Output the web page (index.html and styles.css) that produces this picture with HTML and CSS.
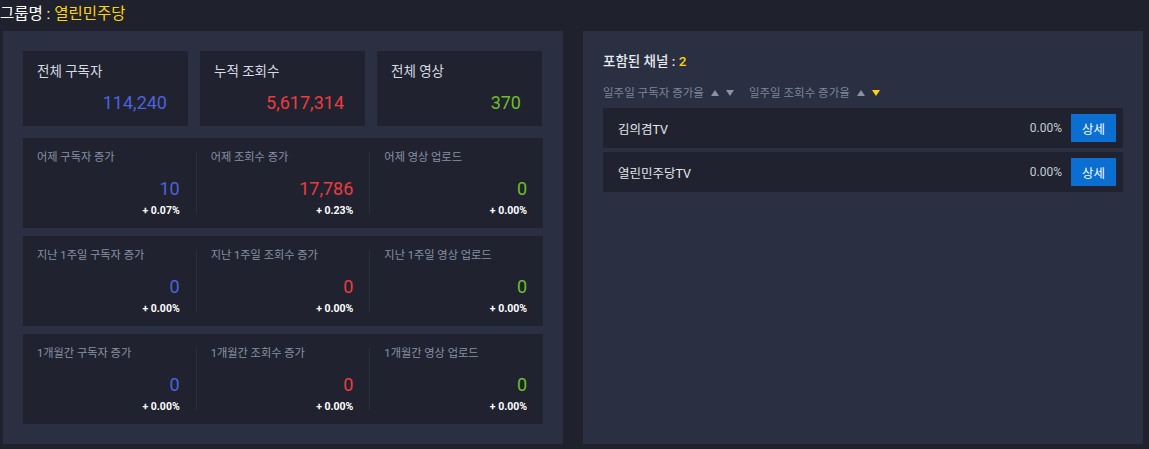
FILE: index.html
```html
<!DOCTYPE html>
<html lang="ko">
<head>
<meta charset="utf-8">
<title>그룹 통계</title>
<link rel="stylesheet" href="styles.css">
</head>
<body>
<div class="page">
  <h1 class="group-title">그룹명 : <span class="accent">열린민주당</span></h1>
  <div class="panels">
    <section class="panel stats">
      <div class="totals">
        <div class="total-card">
          <div class="total-label">전체 구독자</div>
          <div class="total-value blue">114,240</div>
        </div>
        <div class="total-card">
          <div class="total-label">누적 조회수</div>
          <div class="total-value red">5,617,314</div>
        </div>
        <div class="total-card">
          <div class="total-label">전체 영상</div>
          <div class="total-value green">370</div>
        </div>
      </div>

      <div class="period">
        <div class="metric">
          <div class="metric-label">어제 구독자 증가</div>
          <div class="metric-value blue">10</div>
          <div class="metric-rate">+ 0.07%</div>
        </div>
        <div class="metric">
          <div class="metric-label">어제 조회수 증가</div>
          <div class="metric-value red">17,786</div>
          <div class="metric-rate">+ 0.23%</div>
        </div>
        <div class="metric">
          <div class="metric-label">어제 영상 업로드</div>
          <div class="metric-value green">0</div>
          <div class="metric-rate">+ 0.00%</div>
        </div>
      </div>

      <div class="period">
        <div class="metric">
          <div class="metric-label">지난 1주일 구독자 증가</div>
          <div class="metric-value blue">0</div>
          <div class="metric-rate">+ 0.00%</div>
        </div>
        <div class="metric">
          <div class="metric-label">지난 1주일 조회수 증가</div>
          <div class="metric-value red">0</div>
          <div class="metric-rate">+ 0.00%</div>
        </div>
        <div class="metric">
          <div class="metric-label">지난 1주일 영상 업로드</div>
          <div class="metric-value green">0</div>
          <div class="metric-rate">+ 0.00%</div>
        </div>
      </div>

      <div class="period">
        <div class="metric">
          <div class="metric-label">1개월간 구독자 증가</div>
          <div class="metric-value blue">0</div>
          <div class="metric-rate">+ 0.00%</div>
        </div>
        <div class="metric">
          <div class="metric-label">1개월간 조회수 증가</div>
          <div class="metric-value red">0</div>
          <div class="metric-rate">+ 0.00%</div>
        </div>
        <div class="metric">
          <div class="metric-label">1개월간 영상 업로드</div>
          <div class="metric-value green">0</div>
          <div class="metric-rate">+ 0.00%</div>
        </div>
      </div>
    </section>

    <section class="panel channels">
      <h2 class="channels-title">포함된 채널 : <span class="accent">2</span></h2>
      <div class="sorts">
        <div class="sort">
          <span class="sort-label">일주일 구독자 증가율</span>
          <span class="tri tri-up"></span>
          <span class="tri tri-down"></span>
        </div>
        <div class="sort">
          <span class="sort-label">일주일 조회수 증가율</span>
          <span class="tri tri-up"></span>
          <span class="tri tri-down active"></span>
        </div>
      </div>
      <ul class="channel-list">
        <li class="channel">
          <span class="channel-name">김의겸TV</span>
          <span class="channel-rate">0.00%</span>
          <button class="detail-btn">상세</button>
        </li>
        <li class="channel">
          <span class="channel-name">열린민주당TV</span>
          <span class="channel-rate">0.00%</span>
          <button class="detail-btn">상세</button>
        </li>
      </ul>
    </section>
  </div>
</div>
</body>
</html>
```

FILE: styles.css
```css
* { box-sizing: border-box; }

html, body {
  margin: 0;
  padding: 0;
  background: #1f222c;
}

body {
  font-family: Roboto, "Noto Sans CJK KR", sans-serif;
  color: #e4e7ec;
}

.group-title {
  margin: 0;
  height: 31px;
  line-height: 28px;
  font-size: 15.5px;
  font-weight: 400;
  color: #ffffff;
  padding-left: 0;
  white-space: nowrap;
}

.accent { color: #ffd400; }

.panels {
  display: flex;
  gap: 20px;
  padding-left: 3px;
}

.panel {
  width: 560px;
  height: 413px;
  background: #2a3041;
  padding: 20px;
}

/* totals */
.totals {
  display: grid;
  grid-template-columns: repeat(3, 165px);
  gap: 12px;
  margin-bottom: 12px;
}

.total-card {
  height: 75px;
  background: #20232f;
  padding: 10px 21px 0 14px;
  display: flex;
  flex-direction: column;
}

.total-label {
  font-size: 13.5px;
  line-height: 20px;
  color: #d6dae2;
  white-space: nowrap;
}

.total-value {
  margin-top: 11px;
  font-size: 18px;
  line-height: 22px;
  text-align: right;
}

.blue { color: #4f61dc; }
.red { color: #ec3b3f; }
.green { color: #6cbe2a; }

/* period rows */
.period {
  display: flex;
  height: 90px;
  background: #20232f;
  padding: 14px 0;
  margin-bottom: 8px;
}

.metric {
  flex: 1;
  display: flex;
  flex-direction: column;
  padding: 0 16px 0 14px;
}

.metric + .metric {
  border-left: 1px solid #2b2f3c;
}

.metric-label {
  font-size: 11.2px;
  line-height: 12px;
  color: #8891a5;
  white-space: nowrap;
}

.metric-value {
  margin-top: 14px;
  font-size: 18px;
  line-height: 22px;
  text-align: right;
}

.metric-rate {
  margin-top: 4px;
  font-size: 10.5px;
  line-height: 13px;
  font-weight: 700;
  color: #ffffff;
  text-align: right;
  white-space: nowrap;
}

/* channels panel */
.channels-title {
  margin: 0;
  font-size: 13.5px;
  line-height: 20px;
  font-weight: 500;
  color: #e6e9ee;
}

.sorts {
  display: flex;
  gap: 15px;
  margin-top: 15px;
  height: 14px;
  align-items: center;
}

.sort {
  display: flex;
  align-items: center;
}

.sort-label {
  font-size: 11.5px;
  line-height: 14px;
  color: #7d8699;
  margin-right: 7px;
  white-space: nowrap;
}

.tri {
  width: 0;
  height: 0;
  border-left: 4px solid transparent;
  border-right: 4px solid transparent;
}

.tri-up {
  border-bottom: 6px solid #8a93a4;
  margin-right: 7px;
}

.tri-down {
  border-top: 6px solid #8a93a4;
}

.tri-down.active {
  border-top-color: #ffd400;
}

.channel-list {
  list-style: none;
  margin: 8px 0 0;
  padding: 0;
  display: flex;
  flex-direction: column;
  gap: 4px;
}

.channel {
  height: 40px;
  background: #20232f;
  display: flex;
  align-items: center;
  padding: 0 7px 0 15px;
}

.channel-name {
  flex: 1;
  font-size: 12.5px;
  color: #e4e7ec;
}

.channel-rate {
  font-size: 12px;
  color: #c6cbd4;
  margin-right: 9px;
}

.detail-btn {
  width: 45px;
  height: 28px;
  border: 0;
  padding: 0;
  background: #0b6fd1;
  color: #ffffff;
  font-family: "Noto Sans CJK KR", sans-serif;
  font-size: 12.5px;
  cursor: pointer;
}
```
